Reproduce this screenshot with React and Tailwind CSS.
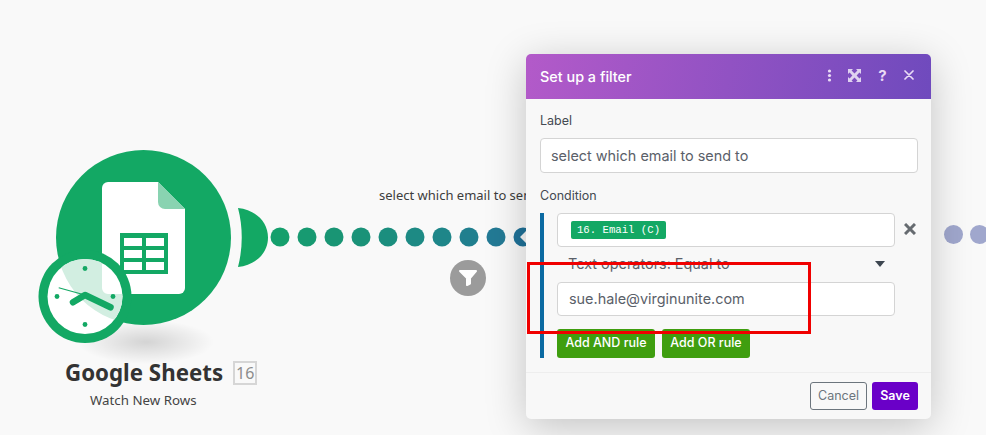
import React from "react";

function Logo() {
  return (
    <svg width="290" height="240" viewBox="0 0 290 240" className="block">
      <defs>
        <radialGradient id="sh" cx="50%" cy="50%" r="50%">
          <stop offset="0%" stopColor="#000" stopOpacity="0.15" />
          <stop offset="100%" stopColor="#000" stopOpacity="0" />
        </radialGradient>
      </defs>
      <ellipse cx="146" cy="192" rx="68" ry="22" fill="url(#sh)" />
      <circle cx="143.5" cy="87.5" r="87.5" fill="#13a864" />
      <path d="M238 58 C256 60 268 72 268 87.5 C268 103 256 115 238 117 C243 98 243 77 238 58 Z" fill="#13a864" />
      <path d="M108 32 H158 L185 59 V138 a6 6 0 0 1 -6 6 H108 a6 6 0 0 1 -6 -6 V38 a6 6 0 0 1 6 -6 Z" fill="#fff" />
      <path d="M158 32 L185 59 H165 a7 7 0 0 1 -7 -7 Z" fill="#89d3b1" />
      <rect x="120" y="83" width="48" height="41" fill="#13a864" />
      <rect x="124" y="88" width="18" height="8" fill="#fff" />
      <rect x="146" y="88" width="18" height="8" fill="#fff" />
      <rect x="124" y="100" width="18" height="8" fill="#fff" />
      <rect x="146" y="100" width="18" height="8" fill="#fff" />
      <rect x="124" y="112" width="18" height="8" fill="#fff" />
      <rect x="146" y="112" width="18" height="8" fill="#fff" />
      <circle cx="85" cy="146.5" r="46.5" fill="#13a864" />
      <circle cx="85" cy="146.5" r="37.5" fill="#fff" />
      <clipPath id="clockClip"><circle cx="85" cy="146.5" r="37.5" /></clipPath>
      <g clipPath="url(#clockClip)">
        <path fillRule="evenodd" d="M56 87.5 a87.5 87.5 0 1 0 175 0 a87.5 87.5 0 1 0 -175 0 Z M108 32 H158 L185 59 V138 a6 6 0 0 1 -6 6 H108 a6 6 0 0 1 -6 -6 V38 a6 6 0 0 1 6 -6 Z" fill="#d2eee1" />
      </g>
      <circle cx="85" cy="118.5" r="2.4" fill="#13a864" />
      <circle cx="85" cy="174.5" r="2.4" fill="#13a864" />
      <circle cx="57" cy="146.5" r="2.4" fill="#13a864" />
      <circle cx="113" cy="146.5" r="2.4" fill="#13a864" />
      <path d="M58.7 137.7 L85 145" stroke="#13a864" strokeWidth="1.1" fill="none" />
      <path d="M73 152.3 L85 145 L110.5 157.3" stroke="#13a864" strokeWidth="6.5" strokeLinecap="round" strokeLinejoin="round" fill="none" />
    </svg>
  );
}

function Dots() {
  const xs = [280, 307, 334, 361, 388, 415, 442, 469, 496];
  const cs = ["#159f6c", "#179a71", "#199574", "#1a9278", "#1b8e7e", "#1d8a84", "#1e8689", "#207f8e", "#237a95"];
  return (
    <svg width="280" height="24" viewBox="270 225 280 24" className="block">
      {xs.map((x, i) => (
        <circle key={x} cx={x} cy="237" r="9.5" fill={cs[i]} />
      ))}
      <path d="M526 231 L520 237 L526 243 V246 A9.5 9.5 0 0 1 523 246.5 A9.5 9.5 0 0 1 523 227.5 A9.5 9.5 0 0 1 526 228 Z" fill="#1f7299" />
    </svg>
  );
}

function Field({ className, children }) {
  return (
    <div className={"flex items-center rounded-[4px] border border-[#d4d4d4] bg-white text-[14.4px] text-[#5a6069] " + className}>
      {children}
    </div>
  );
}

export default function App() {
  return (
    <div className="relative h-[435px] w-[986px] overflow-hidden bg-[#f9f9f9] [font-family:Inter,sans-serif]">
      <div className="absolute left-0 top-[150px]"><Logo /></div>
      <div className="absolute left-[270px] top-[225px]"><Dots /></div>

      <div className="absolute left-[379px] top-[186px] w-[147px] overflow-hidden whitespace-nowrap text-[13px] leading-[18px] text-[#3d3d3d] [font-family:'Noto_Sans',sans-serif]">
        select which email to send to
      </div>

      <div className="absolute left-[450px] top-[259.5px] flex h-[36px] w-[36px] items-center justify-center rounded-full bg-[#9b9b9b]">
        <svg width="22" height="20" viewBox="0 0 22 20"><path d="M3 3 H19 L13 10 V15.5 L10 17 V10 Z" fill="#fff" stroke="#fff" strokeWidth="2" strokeLinejoin="round" /></svg>
      </div>

      <div className="absolute left-[65px] top-[358px] flex items-center gap-[10px] [font-family:'Noto_Sans',sans-serif]">
        <span className="text-[22.3px] font-bold leading-[30px] text-[#333333]">Google Sheets</span>
        <span className="flex h-[24px] w-[24px] items-center justify-center border-2 border-[#d6d6d6] text-[16px] text-[#8c8c8c]">16</span>
      </div>
      <div className="absolute left-[90px] top-[391px] text-[13.3px] leading-[18px] text-[#444444] [font-family:'Noto_Sans',sans-serif]">Watch New Rows</div>

      <div className="absolute left-[944px] top-[225px] h-[19px] w-[19px] rounded-full bg-[#a0a7cd]" />
      <div className="absolute left-[970px] top-[225px] h-[19px] w-[19px] rounded-full bg-[#a0a7cd]" />

      <div className="absolute left-[526px] top-[54px] flex h-[365px] w-[405px] flex-col rounded-[5px] bg-[#f8f8f8] shadow-[0_8px_40px_rgba(0,0,0,0.22)]">
        <div className="flex h-[45px] items-center justify-between rounded-t-[5px] bg-[linear-gradient(100deg,#b35ac9,#6f4abd)] pl-[14px] pr-[17px]">
          <span className="text-[14.4px] font-medium text-white">Set up a filter</span>
          <div className="mb-[3px] flex items-center gap-[16px]">
            <svg width="5" height="13" viewBox="0 0 5 13" fill="#eadcf5"><circle cx="2.5" cy="2" r="1.6" /><circle cx="2.5" cy="6.5" r="1.6" /><circle cx="2.5" cy="11" r="1.6" /></svg>
            <svg width="13" height="13" viewBox="0 0 13 13" fill="#dfd2f0"><path d="M0 0 H5 L3.6 1.6 L6.5 4.4 L9.4 1.6 L8 0 H13 V5 L11.4 3.6 L8.6 6.5 L11.4 9.4 L13 8 V13 H8 L9.4 11.4 L6.5 8.6 L3.6 11.4 L5 13 H0 V8 L1.6 9.4 L4.4 6.5 L1.6 3.6 L0 5 Z" /></svg>
            <span className="w-[11px] text-center text-[15px] font-bold leading-none text-[#eadcf5]">?</span>
            <svg width="10" height="10" viewBox="0 0 10 10" stroke="#eadcf5" strokeWidth="1.7" strokeLinecap="round"><path d="M1 1 L9 9 M9 1 L1 9" /></svg>
          </div>
        </div>

        <div className="flex flex-1 flex-col px-[14px] pt-[14px]">
          <div className="text-[12.5px] leading-[16px] text-[#444a52]">Label</div>
          <Field className="mt-[9px] h-[35px] w-[378px] px-[10px]">select which email to send to</Field>
          <div className="mt-[15px] text-[12.5px] leading-[16px] text-[#444a52]">Condition</div>
          <div className="mt-[9px] flex h-[145px] border-l-4 border-[#0b6aa2] pl-[13px]">
            <div className="flex w-[338px] flex-col">
              <div className="flex h-[34px] items-center rounded-[4px] border border-[#d4d4d4] bg-white pl-[13px]">
                <span className="flex h-[18px] w-[95px] items-center justify-center rounded-[2px] bg-[#13a864] text-[10.67px] text-white [font-family:'Liberation_Mono',monospace]">16. Email (C)</span>
              </div>
              <div className="flex h-[35px] items-center justify-between pb-[2px] pl-[11px] pr-[10px] text-[14.4px] text-[#5a6069]">
                <span>Text operators: Equal to</span>
                <span className="h-0 w-0 border-x-[5px] border-t-[6px] border-x-transparent border-t-[#3d4650]" />
              </div>
              <Field className="h-[34px] px-[11px]">sue.hale@virginunite.com</Field>
              <div className="mt-[13px] flex gap-[7px]">
                <button className="h-[29px] w-[98px] rounded-[3px] bg-[#3f9e0f] text-[12.5px] font-medium text-white">Add AND rule</button>
                <button className="h-[29px] w-[88px] rounded-[3px] bg-[#3f9e0f] text-[12.5px] font-medium text-white">Add OR rule</button>
              </div>
            </div>
            <div className="ml-[9px] mt-[10px]">
              <svg width="12" height="12" viewBox="0 0 12 12" stroke="#666b70" strokeWidth="3"><path d="M1 1 L11 11 M11 1 L1 11" /></svg>
            </div>
          </div>
        </div>

        <div className="flex h-[47px] items-start justify-end gap-[5px] border-t border-[#eeeeee] pr-[13px] pt-[9px]">
          <button className="h-[28px] w-[57px] rounded-[3px] border border-[#6c757d] text-[12.5px] text-[#6c757d]">Cancel</button>
          <button className="h-[28px] w-[46px] rounded-[3px] bg-[#6a00c8] text-[12.5px] font-semibold text-white">Save</button>
        </div>
      </div>

      <div className="pointer-events-none absolute left-[527px] top-[262px] h-[72px] w-[284px] border-[3px] border-[#f00000]" />
    </div>
  );
}
